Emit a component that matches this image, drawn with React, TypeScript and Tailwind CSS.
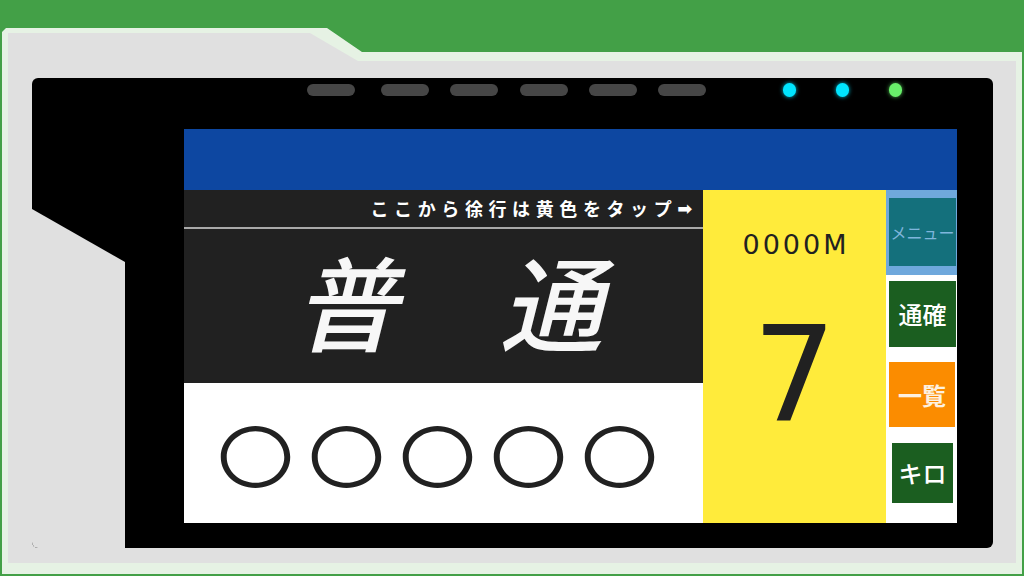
const jp = "font-['Noto_Sans_CJK_JP','Noto_Sans',sans-serif]";

function Pill({ className = '' }: { className?: string }) {
  return <div className={`h-[12px] w-[48px] rounded-full bg-[#464646] ${className}`} />;
}

function Led({ color }: { color: string }) {
  return <div className={`h-[14px] w-[13px] rounded-full ${color}`} />;
}

function SideButton({
  label,
  className,
}: {
  label: string;
  className: string;
}) {
  return (
    <div className={`flex items-center justify-center ${jp} ${className}`}>
      {label}
    </div>
  );
}

export default function App() {
  return (
    <div className="h-[576px] w-[1024px] overflow-hidden bg-[#43a047]">
      {/* device shell: light rim, then grey body */}
      <div className="ml-[2px] mt-[28px] h-[546px] w-[1020px] bg-[#e6f2e4] pl-[6px] pr-[6px] pt-[5px] pb-[11px] [clip-path:polygon(0_4px,4px_0,325px_0,360px_24px,100%_24px,100%_100%,0_100%)]">
        <div className="h-full w-full bg-[#e0e0e0] pl-[24px] pt-[45px] [clip-path:polygon(0_0,302px_0,350px_28px,100%_28px,100%_100%,0_100%)]">
          <div className="flex h-[470px] w-[961px] overflow-hidden rounded-[6px] bg-black">
            {/* grey wedge on the left of the bezel */}
            <div className="flex w-[93px] flex-col">
              <div className="h-[131px]" />
              <div className="flex-1 bg-[#e0e0e0] [clip-path:polygon(0_0,100%_53px,100%_100%,0_100%)]" />
            </div>

            <div className="flex w-[868px] flex-col">
              {/* status strip */}
              <div className="h-[51px]">
                <div className="flex h-[24px] items-center pl-[182px]">
                  <Pill className="mr-[26px]" />
                  <Pill className="mr-[21px]" />
                  <Pill className="mr-[22px]" />
                  <Pill className="mr-[21px]" />
                  <Pill className="mr-[21px]" />
                  <Pill />
                  <div className="ml-[77px] flex gap-[40px]">
                    <Led color="bg-[#00e5ff] shadow-[0_0_4px_#00bcd4]" />
                    <Led color="bg-[#00e5ff] shadow-[0_0_4px_#00bcd4]" />
                    <Led color="bg-[#69f06b] shadow-[0_0_4px_#4caf50]" />
                  </div>
                </div>
              </div>

              {/* display */}
              <div className="ml-[59px] flex h-[394px] w-[773px] flex-col">
                <div className="h-[61px] bg-[#0d47a1]" />
                <div className="flex h-[333px]">
                  <div className="flex w-[519px] flex-col">
                    <div
                      className={`flex h-[37px] items-center justify-end bg-[#212121] pr-[5px] text-[18px] font-bold tracking-[5.6px] text-white ${jp}`}
                    >
                      ここから徐行は黄色をタップ<span className="font-['DejaVu_Sans']">➡</span>
                    </div>
                    <div className="h-[2px] bg-[#a9a9a9]" />
                    <div
                      className={`flex h-[154px] items-center justify-center bg-[#212121] pb-[14px] pl-[10px] text-[103px] font-medium italic leading-none text-[#f7f7f7] ${jp}`}
                    >
                      普　通
                    </div>
                    <div className="flex flex-1 items-center bg-white pl-[33px]">
                      <span
                        className={`inline-block scale-y-[0.88] text-[77px] font-normal leading-none tracking-[14px] text-[#212121] ${jp}`}
                      >
                        〇〇〇〇〇
                      </span>
                    </div>
                  </div>

                  <div className="flex w-[183px] flex-col items-center bg-[#ffeb3b] font-['DejaVu_Sans'] text-[#212121]">
                    <div className="pl-[3px] pt-[41px] text-[27px] leading-none tracking-[3px]">
                      0000M
                    </div>
                    <div className="mt-[50px] text-[132px] leading-none">7</div>
                  </div>

                  <div className="flex w-[71px] flex-col bg-white">
                    <div className="h-[85px] bg-[#6fa8dc] pl-[3px] pr-[1px] pt-[8px]">
                      <SideButton
                        label="メニュー"
                        className="h-[68px] bg-[#14707c] text-[16px] text-[#7fb6dc]"
                      />
                    </div>
                    <SideButton
                      label="通確"
                      className="ml-[3px] mr-[1px] mt-[6px] h-[66px] bg-[#1b5e20] text-[24px] font-medium text-white"
                    />
                    <SideButton
                      label="一覧"
                      className="ml-[3px] mr-[2px] mt-[15px] h-[65px] bg-[#fb8c00] text-[24px] font-bold text-[#fdf1e0]"
                    />
                    <SideButton
                      label="キロ"
                      className="ml-[6px] mr-[4px] mt-[16px] h-[60px] bg-[#1b5e20] text-[24px] font-medium text-white"
                    />
                  </div>
                </div>
              </div>
            </div>
          </div>
        </div>
      </div>
    </div>
  );
}
